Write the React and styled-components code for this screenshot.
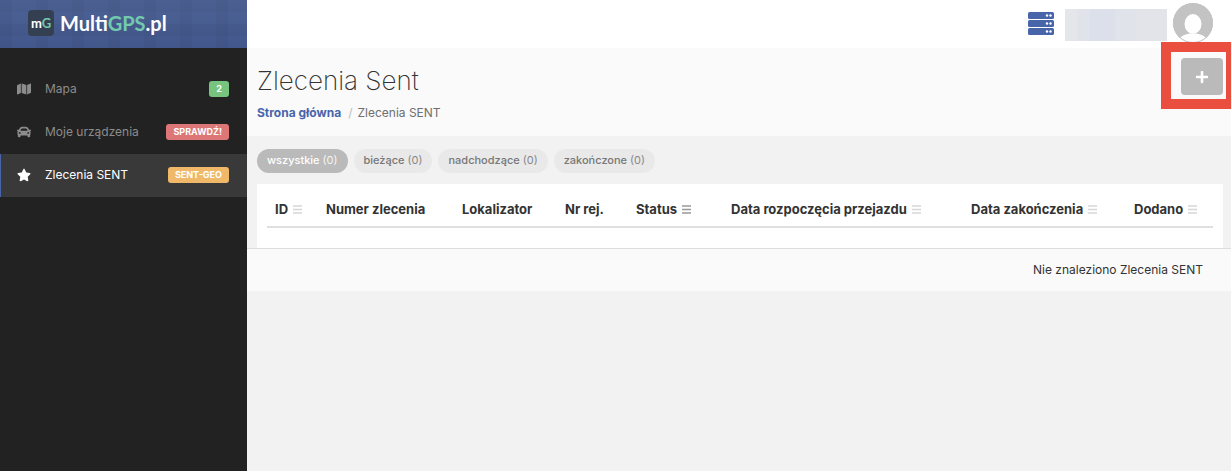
import React from 'react'
import styled, { createGlobalStyle } from 'styled-components'
import { FaMap, FaCar, FaStar, FaPlus } from 'react-icons/fa'

const menu = [
  { label: 'Mapa', icon: FaMap, badge: '2', color: '#76c47d' },
  { label: 'Moje urządzenia', icon: FaCar, badge: 'SPRAWDŹ!', color: '#dd7777' },
  { label: 'Zlecenia SENT', icon: FaStar, badge: 'SENT-GEO', color: '#f0b96a', active: true },
]

const filters = [
  { label: 'wszystkie', active: true },
  { label: 'bieżące' },
  { label: 'nadchodzące' },
  { label: 'zakończone' },
]

const columns = [
  { label: 'ID', width: 51, sort: true },
  { label: 'Numer zlecenia', width: 136 },
  { label: 'Lokalizator', width: 103 },
  { label: 'Nr rej.', width: 71 },
  { label: 'Status', width: 95, sort: true, sorted: true },
  { label: 'Data rozpoczęcia przejazdu', width: 240, sort: true },
  { label: 'Data zakończenia', width: 163, sort: true },
  { label: 'Dodano', width: 87, sort: true },
]

const ServerIcon = () => (
  <svg width="26" height="23" viewBox="0 0 26 23" aria-hidden="true">
    {[0, 8, 16].map((y) => (
      <g key={y}>
        <rect y={y} width="26" height="7" rx="1.5" fill="#4865aa" />
        <circle cx="19" cy={y + 3.5} r="1.2" fill="#fff" />
        <circle cx="22.5" cy={y + 3.5} r="1.2" fill="#fff" />
      </g>
    ))}
  </svg>
)

const Avatar = () => (
  <svg width="40" height="40" viewBox="0 0 40 40" aria-hidden="true">
    <defs>
      <clipPath id="avatar">
        <circle cx="20" cy="20" r="20" />
      </clipPath>
    </defs>
    <g clipPath="url(#avatar)">
      <rect width="40" height="40" fill="#c3c3c3" />
      <ellipse cx="20" cy="21" rx="8.5" ry="10" fill="#fff" />
      <path d="M4 40C6 33 12 30.5 20 30.5S34 33 36 40z" fill="#fff" />
    </g>
    <circle cx="20" cy="20" r="19.5" fill="none" stroke="#c3c3c3" />
  </svg>
)

const SortIcon = () => (
  <svg width="9" height="9" viewBox="0 0 9 9" aria-hidden="true">
    <path d="M0 1h9M0 4.5h9M0 8h9" stroke="currentColor" strokeWidth="1.3" />
  </svg>
)

const App = () => {
  return (
    <Page>
      <GlobalStyle />
      <Sidebar>
        <Brand href="#">
          <BrandMark>
            m<em>G</em>
          </BrandMark>
          <BrandName>
            Multi<em>GPS</em>.pl
          </BrandName>
        </Brand>
        <Nav>
          {menu.map(({ label, icon: Icon, badge, color, active }) => (
            <NavLink key={label} href="#" $active={active}>
              <Icon />
              <span>{label}</span>
              <Badge $color={color}>{badge}</Badge>
            </NavLink>
          ))}
        </Nav>
      </Sidebar>
      <Main>
        <TopBar>
          <ServerIcon />
          <UserName />
          <Avatar />
        </TopBar>
        <PageHeader>
          <div>
            <Title>Zlecenia Sent</Title>
            <Breadcrumb>
              <a href="#">Strona główna</a>
              <i>/</i>
              <span>Zlecenia SENT</span>
            </Breadcrumb>
          </div>
          <AddButton aria-label="Dodaj">
            <FaPlus />
          </AddButton>
          <Highlight />
        </PageHeader>
        <Filters>
          {filters.map(({ label, active }) => (
            <Filter key={label} $active={active}>
              {label} <span>(0)</span>
            </Filter>
          ))}
        </Filters>
        <Panel>
          <Table>
            <colgroup>
              {columns.map(({ label, width }) => (
                <Col key={label} $width={width} />
              ))}
            </colgroup>
            <thead>
              <tr>
                {columns.map(({ label, sort, sorted }) => (
                  <Th key={label} $sorted={sorted}>
                    {label}
                    {sort && <SortIcon />}
                  </Th>
                ))}
              </tr>
            </thead>
          </Table>
        </Panel>
        <PanelFooter>Nie znaleziono Zlecenia SENT</PanelFooter>
      </Main>
    </Page>
  )
}

export default App

const GlobalStyle = createGlobalStyle`
  * {
    box-sizing: border-box;
  }
  body {
    margin: 0;
    background: #f2f2f2;
    color: #333;
    font-family: Inter, 'Liberation Sans', sans-serif;
    font-size: 12px;
  }
  a {
    text-decoration: none;
  }
  em, i {
    font-style: normal;
  }
`
const Page = styled.div`
  display: flex;
  min-height: 100vh;
  overflow: hidden;
`
const Sidebar = styled.aside`
  width: 247px;
  flex-shrink: 0;
  background: #222;
`
const Brand = styled.a`
  display: flex;
  align-items: center;
  gap: 6px;
  height: 48px;
  padding: 0 28px 2px;
  background:
    repeating-linear-gradient(90deg, rgba(0, 0, 0, 0.03) 0 12px, transparent 12px 36px),
    repeating-linear-gradient(rgba(0, 0, 0, 0.03) 0 12px, transparent 12px 24px),
    linear-gradient(#4d6396, #42578b);
  color: #fff;
  font-family: Lato, sans-serif;
  font-weight: 700;
  & em {
    color: #72c9ae;
  }
`
const BrandMark = styled.span`
  width: 26px;
  height: 26px;
  border-radius: 4px;
  background: #344052;
  font-size: 13px;
  line-height: 26px;
  text-align: center;
`
const BrandName = styled.span`
  font-size: 20px;
  line-height: 26px;
`
const Nav = styled.nav`
  padding-top: 20px;
`
const NavLink = styled.a`
  display: flex;
  align-items: center;
  height: 43px;
  padding: 0 18px 2px 16px;
  border-left: 1px solid ${({ $active }) => ($active ? '#4865aa' : 'transparent')};
  background: ${({ $active }) => ($active ? '#393939' : 'transparent')};
  color: ${({ $active }) => ($active ? '#fff' : '#8c8c8c')};
  font-size: 12px;
  & svg {
    width: 14px;
    height: 14px;
    margin-right: 14px;
  }
`
const Badge = styled.span`
  margin-left: auto;
  padding: 0 7px;
  border-radius: 3px;
  background: ${({ $color }) => $color};
  color: #fff;
  font-size: 9px;
  font-weight: 700;
  line-height: 16px;
`
const Main = styled.main`
  flex: 1;
  min-width: 0;
`
const TopBar = styled.header`
  display: flex;
  align-items: center;
  justify-content: flex-end;
  height: 48px;
  padding: 0 18px 2px 0;
  background: #fff;
`
const UserName = styled.div`
  width: 102px;
  height: 32px;
  margin: 4px 6px 0 11px;
  background: linear-gradient(90deg, #e5e6ea 12px, #e1e3ea 12px 25px, #dce0ea 25px 50px, #e0e3ea 50px 70px, #e3e4ea 70px);
`
const PageHeader = styled.div`
  position: relative;
  display: flex;
  justify-content: space-between;
  align-items: flex-start;
  height: 88px;
  padding: 10px 8px 0 10px;
  background: #fafafa;
`
const Title = styled.h1`
  margin: 6px 0 7px;
  font-size: 26px;
  font-weight: 200;
  line-height: 34px;
`
const Breadcrumb = styled.div`
  color: #6f6f6f;
  line-height: 15px;
  & a {
    color: #4865aa;
    font-weight: 700;
  }
  & i {
    margin: 0 5px 0 7px;
    color: #bbb;
  }
`
const AddButton = styled.button`
  display: flex;
  align-items: center;
  justify-content: center;
  width: 42px;
  height: 37px;
  border: 0;
  border-radius: 4px;
  background: #bababa;
  color: #fff;
  font-size: 14px;
  cursor: pointer;
`
const Highlight = styled.div`
  position: absolute;
  top: -6px;
  right: 0;
  width: 70px;
  height: 67px;
  border: 10px solid #e94e3f;
  border-right-width: 5px;
  pointer-events: none;
`
const Filters = styled.div`
  display: flex;
  gap: 6px;
  padding: 13px 10px 11px;
`
const Filter = styled.button`
  height: 24px;
  padding: 0 10px 2px;
  border: 0;
  border-radius: 12px;
  background: ${({ $active }) => ($active ? '#bababa' : '#e9e9e9')};
  color: ${({ $active }) => ($active ? '#fff' : '#777')};
  font: 500 11px Inter, sans-serif;
  cursor: pointer;
  & span {
    font-weight: 400;
    opacity: 0.85;
  }
`
const Panel = styled.section`
  margin: 0 8px 0 10px;
  padding: 8px 10px 20px;
  background: #fff;
`
const Table = styled.table`
  width: 100%;
  table-layout: fixed;
  border-collapse: collapse;
`
const Col = styled.col`
  width: ${({ $width }) => $width}px;
`
const Th = styled.th`
  height: 35px;
  padding: 0 0 0 8px;
  border-bottom: 2px solid #e0e0e0;
  font-size: 13px;
  font-weight: 700;
  text-align: left;
  white-space: nowrap;
  & svg {
    margin-left: 5px;
    color: ${({ $sorted }) => ($sorted ? '#999' : '#d6d6d6')};
  }
`
const PanelFooter = styled.footer`
  padding: 13px 28px 14px;
  border-top: 1px solid #ddd;
  background: #fafafa;
  line-height: 15px;
  text-align: right;
`
